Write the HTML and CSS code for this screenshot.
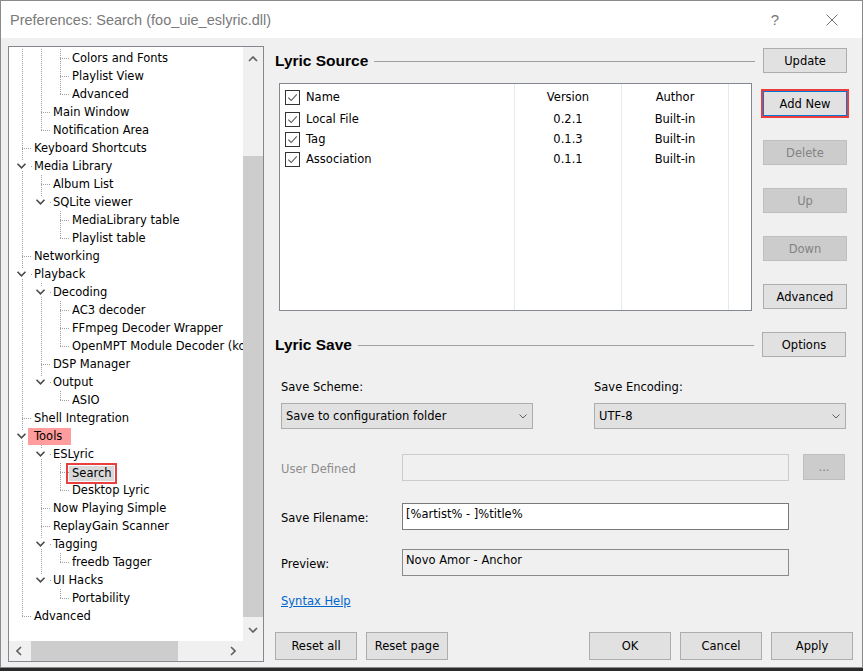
FILE: index.html
```html
<!DOCTYPE html>
<html>
<head>
<meta charset="utf-8">
<title>Preferences: Search</title>
<link rel="stylesheet" href="styles.css">
</head>
<body>
<div class="window">
  <div class="titlebar">
    <div class="title">Preferences: Search (foo_uie_eslyric.dll)</div>
    <div class="tb-btn help">?</div>
    <div class="tb-btn close"><svg width="12" height="12" viewBox="0 0 12 12"><path d="M0.5 0.5L11.5 11.5M11.5 0.5L0.5 11.5" stroke="#6f6f6f" stroke-width="1" fill="none"/></svg></div>
  </div>
  <div class="main">
    <div class="tree">
      <div class="tree-content">
        <div class="row"><span class="g p"></span><span class="g p"></span><span class="g t"></span><span class="lbl">Colors and Fonts</span></div>
        <div class="row"><span class="g p"></span><span class="g p"></span><span class="g t"></span><span class="lbl">Playlist View</span></div>
        <div class="row"><span class="g p"></span><span class="g p"></span><span class="g e"></span><span class="lbl">Advanced</span></div>
        <div class="row"><span class="g p"></span><span class="g t"></span><span class="lbl">Main Window</span></div>
        <div class="row"><span class="g p"></span><span class="g e"></span><span class="lbl">Notification Area</span></div>
        <div class="row"><span class="g t"></span><span class="lbl">Keyboard Shortcuts</span></div>
        <div class="row"><span class="g x"><svg class="chev" width="19" height="18" viewBox="0 0 19 18"><path d="M4.5 6.8l4 4 4-4"/></svg></span><span class="lbl">Media Library</span></div>
        <div class="row"><span class="g p"></span><span class="g t"></span><span class="lbl">Album List</span></div>
        <div class="row"><span class="g p"></span><span class="g xl"><svg class="chev" width="19" height="18" viewBox="0 0 19 18"><path d="M4.5 6.8l4 4 4-4"/></svg></span><span class="lbl">SQLite viewer</span></div>
        <div class="row"><span class="g p"></span><span class="g"></span><span class="g t"></span><span class="lbl">MediaLibrary table</span></div>
        <div class="row"><span class="g p"></span><span class="g"></span><span class="g e"></span><span class="lbl">Playlist table</span></div>
        <div class="row"><span class="g t"></span><span class="lbl">Networking</span></div>
        <div class="row"><span class="g x"><svg class="chev" width="19" height="18" viewBox="0 0 19 18"><path d="M4.5 6.8l4 4 4-4"/></svg></span><span class="lbl">Playback</span></div>
        <div class="row"><span class="g p"></span><span class="g x"><svg class="chev" width="19" height="18" viewBox="0 0 19 18"><path d="M4.5 6.8l4 4 4-4"/></svg></span><span class="lbl">Decoding</span></div>
        <div class="row"><span class="g p"></span><span class="g p"></span><span class="g t"></span><span class="lbl">AC3 decoder</span></div>
        <div class="row"><span class="g p"></span><span class="g p"></span><span class="g t"></span><span class="lbl">FFmpeg Decoder Wrapper</span></div>
        <div class="row"><span class="g p"></span><span class="g p"></span><span class="g e"></span><span class="lbl">OpenMPT Module Decoder (kode54)</span></div>
        <div class="row"><span class="g p"></span><span class="g t"></span><span class="lbl">DSP Manager</span></div>
        <div class="row"><span class="g p"></span><span class="g xl"><svg class="chev" width="19" height="18" viewBox="0 0 19 18"><path d="M4.5 6.8l4 4 4-4"/></svg></span><span class="lbl">Output</span></div>
        <div class="row"><span class="g p"></span><span class="g"></span><span class="g e"></span><span class="lbl">ASIO</span></div>
        <div class="row"><span class="g t"></span><span class="lbl">Shell Integration</span></div>
        <div class="row"><span class="g x"><svg class="chev" width="19" height="18" viewBox="0 0 19 18"><path d="M4.5 6.8l4 4 4-4"/></svg></span><span class="lbl mark">Tools</span></div>
        <div class="row"><span class="g p"></span><span class="g x"><svg class="chev" width="19" height="18" viewBox="0 0 19 18"><path d="M4.5 6.8l4 4 4-4"/></svg></span><span class="lbl">ESLyric</span></div>
        <div class="row"><span class="g p"></span><span class="g p"></span><span class="g t"></span><span class="lbl sel">Search</span></div>
        <div class="row"><span class="g p"></span><span class="g p"></span><span class="g e"></span><span class="lbl">Desktop Lyric</span></div>
        <div class="row"><span class="g p"></span><span class="g t"></span><span class="lbl">Now Playing Simple</span></div>
        <div class="row"><span class="g p"></span><span class="g t"></span><span class="lbl">ReplayGain Scanner</span></div>
        <div class="row"><span class="g p"></span><span class="g x"><svg class="chev" width="19" height="18" viewBox="0 0 19 18"><path d="M4.5 6.8l4 4 4-4"/></svg></span><span class="lbl">Tagging</span></div>
        <div class="row"><span class="g p"></span><span class="g p"></span><span class="g e"></span><span class="lbl">freedb Tagger</span></div>
        <div class="row"><span class="g p"></span><span class="g xl"><svg class="chev" width="19" height="18" viewBox="0 0 19 18"><path d="M4.5 6.8l4 4 4-4"/></svg></span><span class="lbl">UI Hacks</span></div>
        <div class="row"><span class="g p"></span><span class="g"></span><span class="g e"></span><span class="lbl">Portability</span></div>
        <div class="row"><span class="g e"></span><span class="lbl">Advanced</span></div>
      </div>
      <div class="vscroll">
        <div class="sb-btn up"><svg width="10" height="6" viewBox="0 0 10 6"><path d="M1 5l4-4 4 4" fill="none" stroke="#606060" stroke-width="1.6"/></svg></div>
        <div class="vtrack"><div class="vthumb"></div></div>
        <div class="sb-btn down"><svg width="10" height="6" viewBox="0 0 10 6"><path d="M1 1l4 4 4-4" fill="none" stroke="#606060" stroke-width="1.6"/></svg></div>
      </div>
      <div class="hscroll">
        <div class="sb-btn"><svg width="6" height="10" viewBox="0 0 6 10"><path d="M5 1L1 5l4 4" fill="none" stroke="#606060" stroke-width="1.6"/></svg></div>
        <div class="htrack"><div class="hthumb"></div></div>
        <div class="sb-btn"><svg width="6" height="10" viewBox="0 0 6 10"><path d="M1 1l4 4-4 4" fill="none" stroke="#606060" stroke-width="1.6"/></svg></div>
      </div>
      <div class="corner"></div>
    </div>

    <div class="right">
      <div class="src">
        <div class="src-main">
          <div class="heading">Lyric Source</div>
          <div class="list">
            <div class="col col1">
              <div class="hcell"><span class="cb"><svg width="13" height="13" viewBox="0 0 13 13"><path d="M2.3 6.6l2.9 2.9 5.6-6.2"/></svg></span><span class="ctext">Name</span></div>
              <div class="cell"><span class="cb"><svg width="13" height="13" viewBox="0 0 13 13"><path d="M2.3 6.6l2.9 2.9 5.6-6.2"/></svg></span><span class="ctext">Local File</span></div>
              <div class="cell"><span class="cb"><svg width="13" height="13" viewBox="0 0 13 13"><path d="M2.3 6.6l2.9 2.9 5.6-6.2"/></svg></span><span class="ctext">Tag</span></div>
              <div class="cell"><span class="cb"><svg width="13" height="13" viewBox="0 0 13 13"><path d="M2.3 6.6l2.9 2.9 5.6-6.2"/></svg></span><span class="ctext">Association</span></div>
            </div>
            <div class="col col2 center">
              <div class="hcell">Version</div>
              <div class="cell">0.2.1</div>
              <div class="cell">0.1.3</div>
              <div class="cell">0.1.1</div>
            </div>
            <div class="col col3 center">
              <div class="hcell">Author</div>
              <div class="cell">Built-in</div>
              <div class="cell">Built-in</div>
              <div class="cell">Built-in</div>
            </div>
            <div class="col col4"></div>
          </div>
        </div>
        <div class="btncol">
          <button class="btn">Update</button>
          <button class="btn focus b-add">Add New</button>
          <button class="btn dis b-del">Delete</button>
          <button class="btn dis b-next">Up</button>
          <button class="btn dis b-next">Down</button>
          <button class="btn b-next">Advanced</button>
        </div>
      </div>

      <div class="save-head">
        <div class="heading save-title">Lyric Save</div>
        <button class="btn">Options</button>
      </div>

      <div class="savegrid">
        <div class="glabel">Save Scheme:</div>
        <div class="glabel">Save Encoding:</div>
        <div class="select"><span>Save to configuration folder</span><svg width="8" height="5" viewBox="0 0 8 5"><path d="M0.5 0.5l3.5 3.5 3.5-3.5" fill="none" stroke="#606060" stroke-width="1"/></svg></div>
        <div class="select"><span>UTF-8</span><svg width="8" height="5" viewBox="0 0 8 5"><path d="M0.5 0.5l3.5 3.5 3.5-3.5" fill="none" stroke="#606060" stroke-width="1"/></svg></div>
      </div>

      <div class="frow r1">
        <div class="flabel disabled">User Defined</div>
        <div class="field fdis"></div>
        <button class="btn dis dots">...</button>
      </div>
      <div class="frow r2">
        <div class="flabel">Save Filename:</div>
        <div class="field fedit">[%artist% - ]%title%</div>
      </div>
      <div class="frow r3">
        <div class="flabel">Preview:</div>
        <div class="field fread">Novo Amor - Anchor</div>
      </div>

      <div class="link-row"><span class="link">Syntax Help</span></div>

      <div class="bottom">
        <button class="btn big">Reset all</button>
        <button class="btn big">Reset page</button>
        <div class="spacer"></div>
        <button class="btn big">OK</button>
        <button class="btn big">Cancel</button>
        <button class="btn big">Apply</button>
      </div>
    </div>
  </div>
</div>
</body>
</html>
```

FILE: styles.css
```css
* { box-sizing: border-box; }
:root {
  --dv: repeating-linear-gradient(to bottom, #a0a0a0 0 1px, transparent 1px 2px);
  --dh: repeating-linear-gradient(to right, #a0a0a0 0 1px, transparent 1px 2px);
}
html, body { margin: 0; padding: 0; }
body {
  width: 863px;
  height: 671px;
  overflow: hidden;
  background: #2a2a2a;
  font-family: "DejaVu Sans", sans-serif;
  font-size: 11.5px;
  color: #000;
}
.window {
  width: 863px;
  height: 668px;
  background: #f0f0f0;
  border: 1px solid #8a8a8a;
  display: flex;
  flex-direction: column;
}
.titlebar {
  height: 37px;
  flex: none;
  background: #fff;
  display: flex;
  align-items: center;
  padding: 0 7px 0 9px;
}
.title {
  flex: 1;
  font-family: "Liberation Sans", sans-serif;
  font-size: 14.5px;
  color: #7a7a7a;
}
.tb-btn {
  width: 46px;
  height: 37px;
  display: flex;
  align-items: center;
  justify-content: center;
}
.help {
  font-family: "Liberation Sans", sans-serif;
  font-size: 15px;
  color: #777;
  margin-right: 11px;
}

.main {
  display: flex;
  align-items: flex-start;
  gap: 11px;
  padding: 8px 0 0 7px;
}

/* tree */
.tree {
  width: 256px;
  height: 616px;
  flex: none;
  border: 1px solid #828790;
  display: grid;
  grid-template-columns: 234px 20px;
  grid-template-rows: 594px 20px;
}
.tree-content {
  background: #fff;
  overflow: hidden;
  padding: 2px 0 0 4px;
}
.row {
  display: flex;
  height: 18px;
  white-space: nowrap;
}
.g {
  width: 19px;
  height: 18px;
  flex: none;
  background-repeat: no-repeat;
}
.p {
  background-image: var(--dv);
  background-size: 1px 18px;
  background-position: 9px 0;
}
.t {
  background-image: var(--dv), var(--dh);
  background-size: 1px 18px, 10px 1px;
  background-position: 9px 0, 9px 9px;
}
.e {
  background-image: var(--dv), var(--dh);
  background-size: 1px 10px, 10px 1px;
  background-position: 9px 0, 9px 9px;
}
.x {
  background-image: var(--dv), var(--dv), var(--dh);
  background-size: 1px 4px, 1px 4px, 1px 1px;
  background-position: 9px 0, 9px 14px, 18px 9px;
}
.xl {
  background-image: var(--dv), var(--dh);
  background-size: 1px 4px, 1px 1px;
  background-position: 9px 0, 18px 9px;
}
.chev { display: block; }
.chev path { fill: none; stroke: #4a4a4a; stroke-width: 1.6; }
.lbl {
  padding: 0 2px;
  line-height: 18px;
}
.lbl.mark {
  background: #ff9c9c;
  margin: 1px 0 0 -4px;
  padding: 0 9px 0 6px;
  line-height: 17px;
}
.lbl.sel {
  background: #d9d9d9;
  margin: 3px 0 0 -1px;
  padding: 0 2px 0 3px;
  height: 15px;
  line-height: 15px;
  outline: 2px solid #e8403e;
  outline-offset: 1px;
}

.vscroll {
  background: #f0f0f0;
  display: flex;
  flex-direction: column;
}
.sb-btn {
  width: 20px;
  height: 20px;
  flex: none;
  display: flex;
  align-items: center;
  justify-content: center;
}
.sb-btn svg { display: block; }
.sb-btn.up { padding-top: 4px; }
.sb-btn.down { padding-bottom: 3px; }
.vtrack { flex: 1; }
.vthumb {
  margin-top: 89px;
  height: 461px;
  background: #cdcdcd;
}
.hscroll {
  background: #f0f0f0;
  display: flex;
}
.htrack { flex: 1; }
.hthumb {
  margin-left: 2px;
  width: 147px;
  height: 20px;
  background: #cdcdcd;
}
.corner { background: #f0f0f0; }

/* right side */
.right {
  width: 578px;
  margin-top: 2px;
  display: flex;
  flex-direction: column;
}
.src {
  display: flex;
  gap: 8px;
}
.src-main { width: 480px; }
.heading {
  height: 25px;
  display: flex;
  align-items: center;
  font-family: "Liberation Sans", sans-serif;
  font-weight: bold;
  font-size: 15.5px;
  white-space: nowrap;
}
.heading::after {
  content: "";
  flex: 1;
  height: 1px;
  background: #a0a0a0;
  margin: 2px 0 0 6px;
}
.list {
  margin: 10px 0 0 4px;
  width: 473px;
  height: 228px;
  border: 1px solid #828790;
  background: #fff;
  display: flex;
}
.col { border-right: 1px solid #e6e9ee; }
.col1 { width: 235px; }
.col2, .col3 { width: 107px; }
.col4 { flex: 1; border-right: none; }
.hcell {
  height: 25px;
  display: flex;
  align-items: center;
  padding-top: 1px;
}
.cell {
  height: 20px;
  display: flex;
  align-items: center;
}
.col1 .hcell, .col1 .cell { padding-left: 5px; }
.center .hcell, .center .cell { justify-content: center; }
.cb {
  width: 15px;
  height: 15px;
  border: 1px solid #333;
  background: #fff;
  display: flex;
  align-items: center;
  justify-content: center;
  flex: none;
}
.cb svg { display: block; }
.cb path { fill: none; stroke: #5a5a5a; stroke-width: 1.1; }
.ctext { margin-left: 6px; }

.btncol {
  width: 84px;
  display: flex;
  flex-direction: column;
}
.btn {
  font: inherit;
  color: #000;
  width: 84px;
  height: 25px;
  flex: none;
  padding: 0;
  margin: 0;
  background: #e1e1e1;
  border: 1px solid #adadad;
  border-radius: 0;
}
.btn.focus {
  border-color: #0078d7;
  outline: 2px solid #ee3b3b;
  outline-offset: 0;
}
.btn.dis {
  background: #cccccc;
  border-color: #bfbfbf;
  color: #838383;
}
.b-add { margin-top: 18px; }
.b-del { margin-top: 24px; }
.b-next { margin-top: 23px; }

.save-head {
  margin-top: 21px;
  display: flex;
  gap: 8px;
}
.save-title { width: 479px; }

.savegrid {
  margin-top: 22px;
  padding-left: 6px;
  display: grid;
  grid-template-columns: 252px 252px;
  column-gap: 61px;
}
.glabel {
  height: 16px;
  line-height: 16px;
  margin-bottom: 8px;
}
.select {
  height: 26px;
  background: #e1e1e1;
  border: 1px solid #adadad;
  display: flex;
  align-items: center;
  justify-content: space-between;
  padding: 0 5px 0 4px;
}
.select svg { display: block; }

.frow {
  display: flex;
  align-items: center;
  padding-left: 6px;
}
.r1 { margin-top: 25px; }
.r2 { margin-top: 22px; }
.r3 { margin-top: 19px; }
.flabel {
  width: 121px;
  padding-top: 3px;
}
.flabel.disabled { color: #8d8d8d; }
.field {
  width: 387px;
  height: 27px;
  padding: 2px 3px;
  line-height: 16px;
}
.fdis { background: #f0f0f0; border: 1px solid #cccccc; }
.fedit { background: #fff; border: 1px solid #7a7a7a; }
.fread { background: #f0f0f0; border: 1px solid #8a8a8a; }
.btn.dots {
  width: 42px;
  height: 26px;
  margin-left: 14px;
  margin-top: -1px;
}
.link-row {
  margin-top: 17px;
  padding-left: 6px;
  line-height: 16px;
}
.link {
  color: #0066cc;
  text-decoration: underline;
}
.bottom {
  margin-top: 23px;
  display: flex;
  gap: 9px;
}
.spacer { flex: 1; }
.btn.big {
  width: 82px;
  height: 28px;
}
```
